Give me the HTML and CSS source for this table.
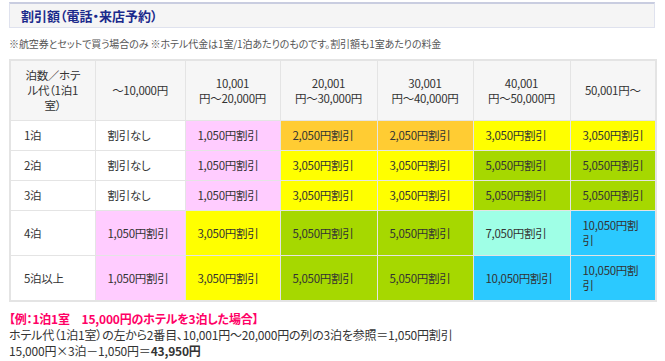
FILE: index.html
```html
<!DOCTYPE html>
<html lang="ja">
<head>
<meta charset="utf-8">
<title>割引額</title>
<link rel="stylesheet" href="styles.css">
</head>
<body>
<div class="page">
  <h2 class="title">割引額（電話・来店予約）</h2>
  <p class="note">※航空券とセットで買う場合のみ ※ホテル代金は1室/1泊あたりのものです。割引額も1室あたりの料金</p>
  <table class="rates">
    <colgroup>
      <col class="c1"><col class="c2"><col class="c3"><col class="c4"><col class="c5"><col class="c6"><col class="c7">
    </colgroup>
    <thead>
      <tr>
        <th>泊数／ホテル代（1泊1室）</th>
        <th>～10,000円</th>
        <th>10,001<br>円～20,000円</th>
        <th>20,001<br>円～30,000円</th>
        <th>30,001<br>円～40,000円</th>
        <th>40,001<br>円～50,000円</th>
        <th>50,001円～</th>
      </tr>
    </thead>
    <tbody>
      <tr>
        <td class="n">1泊</td>
        <td>割引なし</td>
        <td class="pink">1,050円割引</td>
        <td class="orange">2,050円割引</td>
        <td class="orange">2,050円割引</td>
        <td class="yellow">3,050円割引</td>
        <td class="yellow">3,050円割引</td>
      </tr>
      <tr>
        <td class="n">2泊</td>
        <td>割引なし</td>
        <td class="pink">1,050円割引</td>
        <td class="yellow">3,050円割引</td>
        <td class="yellow">3,050円割引</td>
        <td class="green">5,050円割引</td>
        <td class="green">5,050円割引</td>
      </tr>
      <tr>
        <td class="n">3泊</td>
        <td>割引なし</td>
        <td class="pink">1,050円割引</td>
        <td class="yellow">3,050円割引</td>
        <td class="yellow">3,050円割引</td>
        <td class="green">5,050円割引</td>
        <td class="green">5,050円割引</td>
      </tr>
      <tr class="tall">
        <td class="n">4泊</td>
        <td class="pink">1,050円割引</td>
        <td class="yellow">3,050円割引</td>
        <td class="green">5,050円割引</td>
        <td class="green">5,050円割引</td>
        <td class="mint">7,050円割引</td>
        <td class="blue">10,050円割引</td>
      </tr>
      <tr class="tall">
        <td class="n">5泊以上</td>
        <td class="pink">1,050円割引</td>
        <td class="yellow">3,050円割引</td>
        <td class="green">5,050円割引</td>
        <td class="green">5,050円割引</td>
        <td class="blue">10,050円割引</td>
        <td class="blue">10,050円割引</td>
      </tr>
    </tbody>
  </table>
  <div class="example">
    <p class="ex-head">【例：1泊1室　15,000円のホテルを3泊した場合】</p>
    <p>ホテル代（1泊1室）の左から2番目、10,001円～20,000円の列の3泊を参照＝1,050円割引</p>
    <p>15,000円×3泊－1,050円＝<strong>43,950円</strong></p>
  </div>
</div>
</body>
</html>
```

FILE: styles.css
```css
html, body {
  margin: 0;
  padding: 0;
  background: #ffffff;
}

body {
  font-family: "Noto Sans CJK JP", "Noto Sans", sans-serif;
  color: #333333;
  font-feature-settings: "palt";
}

.page {
  width: 646px;
  padding: 2px 0 0 9px;
}

.title {
  margin: 0;
  height: 23px;
  line-height: 23px;
  padding-left: 11px;
  background: #f5f5f5;
  border: 1px solid #dfe2ee;
  border-top: 2px solid #c9cde0;
  font-size: 13px;
  font-weight: bold;
  color: #1b2a8c;
  box-sizing: content-box;
  width: 633px;
}

.note {
  margin: 9px 0 0 0;
  font-size: 10px;
  line-height: 13px;
  color: #555555;
  letter-spacing: -0.1px;
}

.rates {
  margin-top: 9px;
  width: 646px;
  table-layout: fixed;
  border-collapse: collapse;
  border: 2px solid #e4e4e4;
  font-size: 11.5px;
  line-height: 15px;
  letter-spacing: -0.3px;
}

.c1 { width: 85px; }
.c2 { width: 90px; }
.c3 { width: 95px; }
.c4 { width: 97px; }
.c5 { width: 96px; }
.c6 { width: 97px; }
.c7 { width: 86px; }

.rates th {
  background: #f6f6f6;
  font-weight: normal;
  text-align: center;
  padding: 7px 8px;
  border: 1px solid #e4e4e4;
  color: #333333;
}

.rates th:first-child {
  padding: 7px 12px;
}

.rates td {
  padding: 7px 11px 7px 12px;
  border: 1px solid #e4e4e4;
  text-align: left;
  vertical-align: middle;
  background: #ffffff;
}

.rates td.n {
  padding-left: 13px;
}

.pink { background: #ffccff !important; }
.orange { background: #ffcc33 !important; }
.yellow { background: #ffff00 !important; }
.green { background: #a6d800 !important; }
.mint { background: #9fffe6 !important; }
.blue { background: #2bc9ff !important; }

.example {
  margin-top: 9px;
  font-size: 12px;
  line-height: 16px;
  letter-spacing: -0.2px;
}

.example p {
  margin: 0;
}

.ex-head {
  color: #ff0066;
  font-weight: bold;
}

.example strong {
  font-weight: bold;
  color: #333333;
}
```
